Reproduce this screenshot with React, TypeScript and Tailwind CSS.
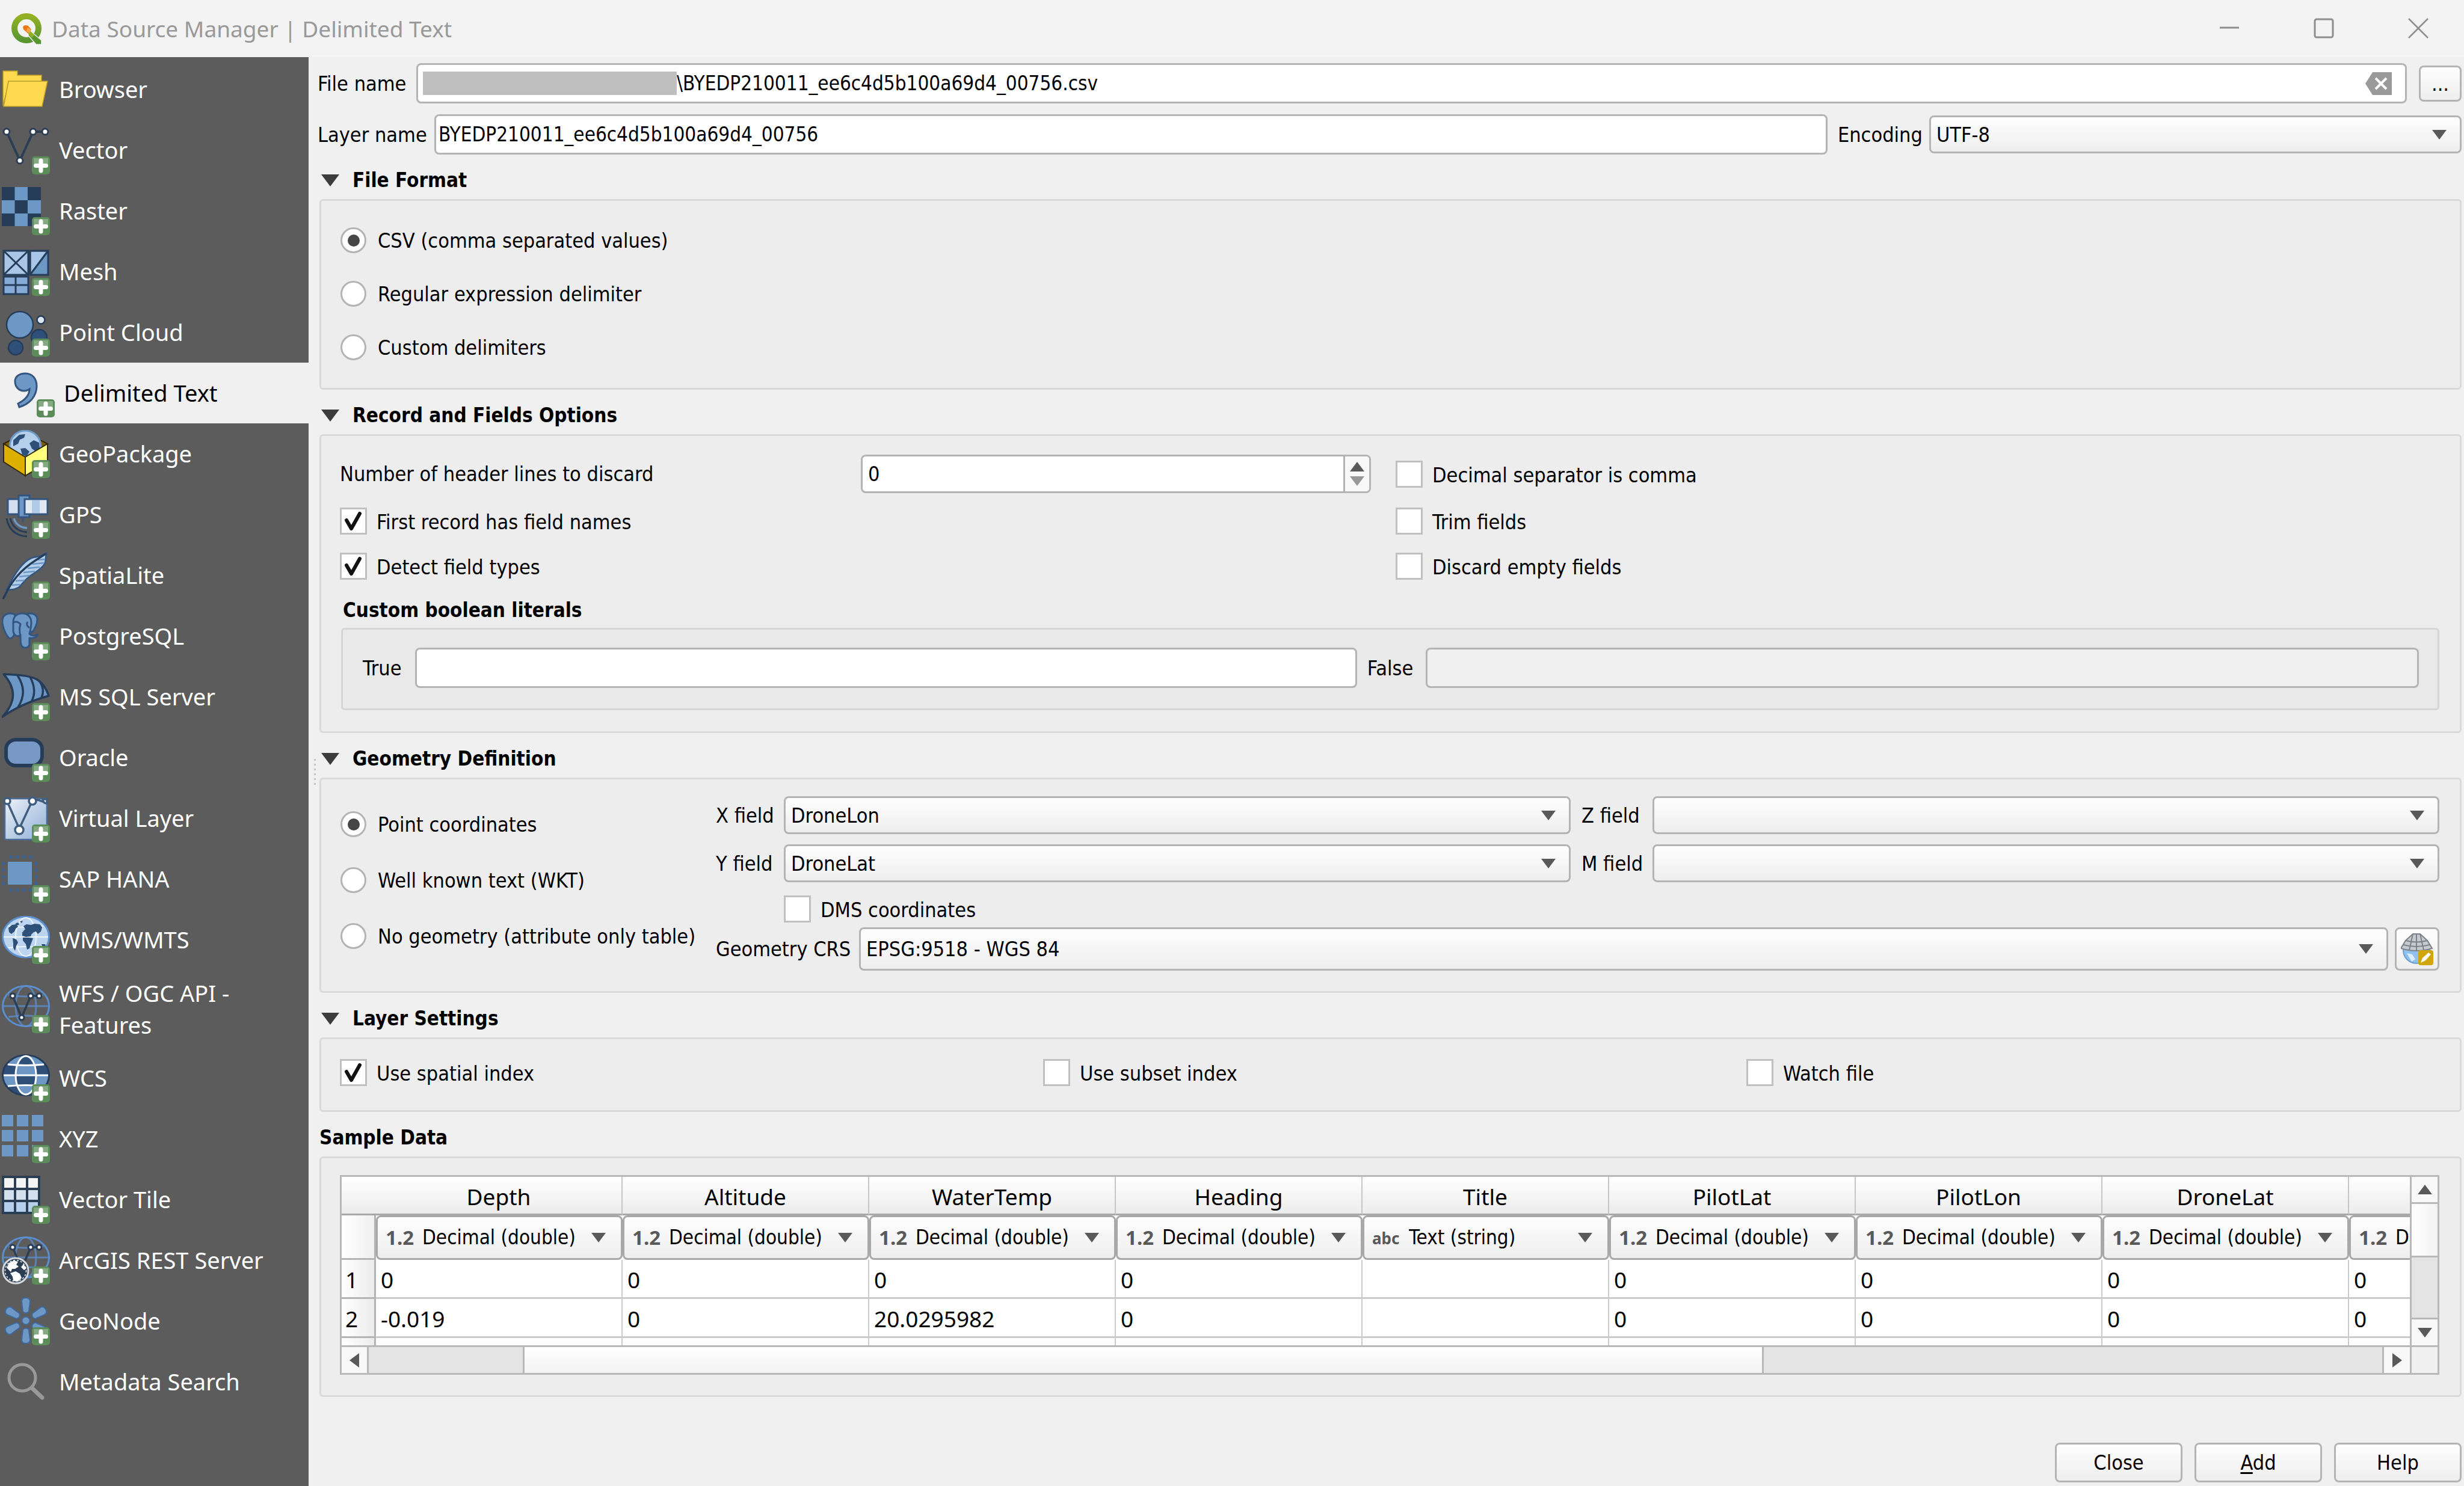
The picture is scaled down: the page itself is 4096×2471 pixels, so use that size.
import React from "react";
import clsx from "clsx";

const BLUE = "#6d97c4";
const NAVY = "#263d5a";
const EDGE = "#335580";

/* ---------- sidebar icons, all on an 80 x 80 canvas ---------- */

function PlusBadge() {
  return (
    <g stroke="none">
      <rect x="50" y="50" width="30" height="30" rx="5" fill="#5b8c5a" />
      <path d="M53 53h24v12q-12 3 -24 0z" fill="#fff" opacity=".25" />
      <path d="M65 57v17M56.500 65.500h17" stroke="#fff" strokeWidth="7" strokeLinecap="round" />
    </g>
  );
}

function Nodes({ pts, r = 5 }: { pts: number[][]; r?: number }) {
  return (
    <>
      {pts.map(([x, y]) => (
        <circle key={`${x}-${y}`} cx={x} cy={y} r={r} fill="#fff" stroke="#2b3e54" strokeWidth="3" />
      ))}
    </>
  );
}

function WireGlobe() {
  return (
    <g fill="none" stroke="#5b8fd0" strokeWidth="3">
      <ellipse cx="40" cy="35" rx="38.500" ry="33.500" />
      <ellipse cx="40" cy="35" rx="17" ry="33.500" opacity=".75" />
      <path d="M2 35h76" opacity=".75" />
      <path d="M11 17q29 4 58 0M11 53q29 -4 58 0" opacity=".75" />
    </g>
  );
}

const continents = (
  <g fill="#2d4f78">
    <path d="M11 20l6-5 7-1 3 4-4 3-2 5-5 4-4-3z" />
    <path d="M22 13l5-2 2 3-3 2zM30 9l5-1-2 4z" />
    <path d="M18 37l6 2 3 5-3 6-2 8-3-5v-8z" />
    <path d="M36 17l5-3 8 1 5-2 9 1 4 5-2 7-5 4-3-4-4 1-3 3-5-3-6 2-4-3 4-4z" />
    <path d="M34 27l8-1 8 3-2 5-8 1-6-2z" />
    <path d="M35 36l9 0 8 1-3 8-3 9-4 2-2-9-5-6z" />
    <path d="M66 47l6 0 1 4-5 1z" />
  </g>
);

const icons: Record<string, React.ReactNode> = {
  folder: (
    <g fill="#fdd94f" stroke="#b99a2a" strokeWidth="1.500">
      <path d="M2 67V9h24v7h40v12H12z" />
      <path d="M3 68L11 26h65l-9 42z" />
    </g>
  ),
  vector: (
    <g>
      <path d="M8 9L30 57L52 9H72" fill="none" stroke="#2b3e54" strokeWidth="4" />
      <Nodes pts={[[8, 9], [30, 57], [52, 9], [72, 9]]} />
      <PlusBadge />
    </g>
  ),
  raster: (
    <g>
      <path d="M0 0h65v65H0z" fill={BLUE} />
      <path d="M0 0h21.500v22H0zM43 0h22v22H43zM21.500 22H43v22H21.500zM0 44h21.500v21H0zM43 44h22v21H43z" fill={NAVY} />
      <PlusBadge />
    </g>
  ),
  mesh: (
    <g stroke={NAVY} strokeWidth="3">
      <path d="M3 5h41v40H3z" fill="#a9c6e6" />
      <path d="M47 5h30v40H47z" fill={BLUE} />
      <path d="M49 7h24L49 40z" fill="#a9c6e6" stroke="none" />
      <path d="M3 48h41v29H3z" fill="#86abd6" />
      <path d="M3 5l41 40M44 5L3 45M77 5L47 45M23 48v29M3 62h41" fill="none" />
      <PlusBadge />
    </g>
  ),
  pointcloud: (
    <g stroke={NAVY} strokeWidth="2.500">
      <circle cx="62" cy="48" r="13" fill="#2d4f78" />
      <circle cx="23" cy="65" r="12" fill="#2d4f78" />
      <circle cx="30" cy="27" r="22" fill={BLUE} />
      <circle cx="65" cy="19" r="6.500" fill="#dce6f2" />
      <PlusBadge />
    </g>
  ),
  comma: (
    <g>
      <path
        d="M14 20C14 12 21 7 31 7C43 7 50 16 50 28C50 45 38 58 21 63L19 57C31 51 38 43 38 33C35 35 32 36 29 36C20 36 14 29 14 20z"
        fill={BLUE}
        stroke={EDGE}
        strokeWidth="3"
      />
      <PlusBadge />
    </g>
  ),
  geopackage: (
    <g>
      <path d="M3 23L39 4L76 23L39 45z" fill="#7a5e00" stroke="#332800" strokeWidth="2" />
      <circle cx="39" cy="27" r="26" fill="#b4cfec" stroke={BLUE} strokeWidth="3" />
      <path d="M19 17l10-9 10-1-2 6-7 3-3 7-8 4zM46 22l7-5 9 4 1 10-6 5-7-5zM31 31l8-1 7 6-5 8-7-3z" fill="#2d4f78" />
      <path d="M3 23L39 45V76L3 53z" fill="#dcb000" stroke="#332800" strokeWidth="2" />
      <path d="M39 45L76 23V54L39 76z" fill="#ffff7d" stroke="#332800" strokeWidth="2" />
      <PlusBadge />
    </g>
  ),
  gps: (
    <g>
      <path d="M10 14h20v25H10z" fill="#d2dff0" stroke={EDGE} strokeWidth="3" />
      <path d="M28 8h18v36H28z" fill={BLUE} stroke={EDGE} strokeWidth="3" />
      <path d="M38 14h38v25H38z" fill="#e2e8f2" stroke={EDGE} strokeWidth="3" />
      <path d="M50 16h13v21H50z" fill="#b0cbe8" />
      <path d="M35 45v7" stroke={EDGE} strokeWidth="3" />
      <path d="M20 46q5 15 22 16" fill="none" stroke={BLUE} strokeWidth="3.500" />
      <path d="M14 46q5 21 28 23M8 46q5 28 34 30" fill="none" stroke={NAVY} strokeWidth="3" />
      <PlusBadge />
    </g>
  ),
  feather: (
    <g>
      <path d="M75 2C66 9 58 8 49 11C38 16 24 31 10 60L8 63C15 64 23 63 29 59C35 53 40 45 48 40C57 34 66 29 71 21C74 15 72 8 75 2z" fill="#b4cfec" stroke={EDGE} strokeWidth="2.500" />
      <path d="M17 56l13-1M23 49l15-1M29 42l17-2M36 35l19-2M43 28l20-2M51 21l19-2M60 14l12-1" stroke={BLUE} strokeWidth="2.500" />
      <path d="M73 4C50 18 28 32 12 60L2 79" fill="none" stroke={NAVY} strokeWidth="3.500" />
      <PlusBadge />
    </g>
  ),
  elephant: (
    <g fill={BLUE} stroke={EDGE} strokeWidth="3" strokeLinejoin="round">
      <path d="M22 4C14 0 2 2 1 13C0 24 7 38 12 43C16 45 20 40 21 36z" />
      <path d="M42 3C50 0 59 4 59 12C59 20 54 29 50 34L41 24z" />
      <path d="M19 17C19 6 26 2 34 2C43 2 49 8 49 17C49 25 47 31 46 36C50 40 56 39 60 37C58 42 52 44 46 43V53C45 61 34 61 32 54C31 49 31 43 31 38C25 42 20 38 19 32z" />
      <path d="M19 17q7-3 12 3q-3 10 0 18M43 16q-4 5 3 10" fill="none" />
      <PlusBadge />
    </g>
  ),
  sail: (
    <g fill={BLUE} stroke={NAVY} strokeWidth="3.500" strokeLinejoin="round">
      <path d="M3 2C24 3 44 4 57 10C68 16 74 26 78 38C50 46 22 58 1 73C24 48 24 26 3 2z" />
      <path d="M26 4C38 22 38 40 27 57M47 7C55 21 56 36 49 48M63 14C69 23 70 32 66 41" fill="none" />
      <PlusBadge />
    </g>
  ),
  oracle: (
    <g>
      <rect x="7" y="10" width="60" height="43" rx="16" fill="#7898c6" stroke={NAVY} strokeWidth="6" />
      <PlusBadge />
    </g>
  ),
  virtual: (
    <g>
      <defs>
        <linearGradient id="virtualBg" x1="0" y1="0" x2="1" y2="1">
          <stop offset="0" stopColor="#eef1f6" />
          <stop offset="1" stopColor="#8fb0d8" />
        </linearGradient>
      </defs>
      <rect x="5" y="7" width="70" height="68" rx="2" fill="url(#virtualBg)" stroke="#4a6c96" strokeWidth="2.500" />
      <path d="M9 12L29 57L50 12L60 9L74 14" fill="none" stroke="#3f5e80" strokeWidth="3.500" />
      <g fill="#fff" stroke="#3f5e80" strokeWidth="3.500">
        <circle cx="9" cy="11" r="5" />
        <circle cx="29" cy="59" r="7" />
        <circle cx="51" cy="11" r="6" />
        <path d="M68 8q1 7 7 7v-7z" />
      </g>
      <PlusBadge />
    </g>
  ),
  hana: (
    <g>
      <path d="M10 11h40v38H10z" fill={BLUE} />
      <g fill="#3d628f">
        {[13, 24, 35, 46].map((p) => (
          <React.Fragment key={p}>
            <circle cx={p + 2} cy="3" r="3" />
            <circle cx={p + 2} cy="58" r="3" />
            <circle cx="3" cy={p + 1} r="3" />
            <circle cx="57" cy={p + 1} r="3" />
          </React.Fragment>
        ))}
      </g>
      <PlusBadge />
    </g>
  ),
  wms: (
    <g>
      <ellipse cx="40" cy="35" rx="38.500" ry="34" fill="#bcd4ee" stroke="#5b8fd0" strokeWidth="3" />
      <g fill="none" stroke="#eef4fb" strokeWidth="2">
        <ellipse cx="40" cy="35" rx="17" ry="32" />
        <path d="M3 35h74M11 17q29 4 58 0M11 53q29 -4 58 0" />
      </g>
      {continents}
      <PlusBadge />
    </g>
  ),
  wfs: (
    <g>
      <WireGlobe />
      <path d="M18 18L33 54L48 18H62" fill="none" stroke="#2b3e54" strokeWidth="3.500" />
      <Nodes pts={[[18, 18], [33, 54], [48, 18], [62, 18]]} r={4} />
      <PlusBadge />
    </g>
  ),
  wcs: (
    <g>
      <clipPath id="wcsClip">
        <ellipse cx="40" cy="35" rx="39" ry="34" />
      </clipPath>
      <clipPath id="wcsCore">
        <ellipse cx="40" cy="35" rx="17" ry="32" />
      </clipPath>
      <g clipPath="url(#wcsClip)">
        <path d="M0 0h80v18H0zM0 35h80v18H0z" fill={BLUE} />
        <path d="M0 18h80v17H0zM0 53h80v17H0z" fill="#2d4f78" />
        <g clipPath="url(#wcsCore)">
          <path d="M0 0h80v18H0zM0 35h80v18H0z" fill="#2d4f78" />
          <path d="M0 18h80v17H0zM0 53h80v17H0z" fill={BLUE} />
        </g>
      </g>
      <ellipse cx="40" cy="35" rx="38.500" ry="33.500" fill="none" stroke={NAVY} strokeWidth="3" />
      <g fill="none" stroke="#fff" strokeWidth="3">
        <ellipse cx="40" cy="35" rx="17" ry="32" />
        <path d="M3 35h74M10 17q30 3 60 0M10 53q30 -3 60 0" />
      </g>
      <PlusBadge />
    </g>
  ),
  xyz: (
    <g fill={BLUE}>
      {[0, 25, 50].map((y) =>
        [0, 25, 50].map((x) => <rect key={`${x}-${y}`} x={x} y={y} width="19" height="19" />)
      )}
      <PlusBadge />
    </g>
  ),
  vectortile: (
    <g>
      <path d="M0 0h64v64H0z" fill="#2b3e54" />
      {["#f4f4f4", "#d4e0ee", "#b6cfea"].map((fill, row) =>
        [0, 1, 2].map((col) => (
          <rect key={`${row}-${col}`} x={4 + col * 20} y={4 + row * 20} width="16" height="16" fill={fill} />
        ))
      )}
      <PlusBadge />
    </g>
  ),
  arcgis: (
    <g>
      <WireGlobe />
      <path d="M18 18L33 54L48 18H62" fill="none" stroke="#2b3e54" strokeWidth="3.500" />
      <Nodes pts={[[18, 18], [48, 18], [62, 18]]} r={4} />
      <circle cx="23" cy="57" r="21" fill="#2b3e54" stroke="#d5d8dc" strokeWidth="3" />
      <path d="M8 52l4-8 8-4 7 2-3 5 4 3-6 4-5 0-2 5zM14 61l9-3 7 4 3 7-6 6-8-1-1-7zM36 46l5 7-4 3-5-5z" fill="#fff" />
      <circle cx="23" cy="57" r="17.500" fill="none" stroke="#fff" strokeWidth="1.500" strokeDasharray="3 3" />
      <PlusBadge />
    </g>
  ),
  geonode: (
    <g fill={BLUE} stroke="#3f689c" strokeWidth="2">
      {[0, 60, 120, 180, 240, 300].map((a) => (
        <path key={a} d="M33 7q0-6 7-6t7 6l-2 17q-5 5-10 0z" transform={`rotate(${a} 40 39)`} />
      ))}
      <circle cx="40" cy="39" r="6.500" />
      <PlusBadge />
    </g>
  ),
  search: (
    <g fill="none" stroke="#999" strokeWidth="5" strokeLinecap="round">
      <circle cx="34" cy="33" r="22" />
      <path d="M50 50L67 66" strokeWidth="7" />
    </g>
  ),
};

const sources = [
  { label: "Browser", icon: "folder" },
  { label: "Vector", icon: "vector" },
  { label: "Raster", icon: "raster" },
  { label: "Mesh", icon: "mesh" },
  { label: "Point Cloud", icon: "pointcloud" },
  { label: "Delimited Text", icon: "comma", active: true },
  { label: "GeoPackage", icon: "geopackage" },
  { label: "GPS", icon: "gps" },
  { label: "SpatiaLite", icon: "feather" },
  { label: "PostgreSQL", icon: "elephant" },
  { label: "MS SQL Server", icon: "sail" },
  { label: "Oracle", icon: "oracle" },
  { label: "Virtual Layer", icon: "virtual" },
  { label: "SAP HANA", icon: "hana" },
  { label: "WMS/WMTS", icon: "wms" },
  { label: "WFS / OGC API - Features", icon: "wfs", tall: true },
  { label: "WCS", icon: "wcs" },
  { label: "XYZ", icon: "xyz" },
  { label: "Vector Tile", icon: "vectortile" },
  { label: "ArcGIS REST Server", icon: "arcgis" },
  { label: "GeoNode", icon: "geonode" },
  { label: "Metadata Search", icon: "search" },
];

const columns = [
  { name: "Depth", type: "Decimal (double)", values: ["0", "-0.019"] },
  { name: "Altitude", type: "Decimal (double)", values: ["0", "0"] },
  { name: "WaterTemp", type: "Decimal (double)", values: ["0", "20.0295982"] },
  { name: "Heading", type: "Decimal (double)", values: ["0", "0"] },
  { name: "Title", type: "Text (string)", values: ["", ""] },
  { name: "PilotLat", type: "Decimal (double)", values: ["0", "0"] },
  { name: "PilotLon", type: "Decimal (double)", values: ["0", "0"] },
  { name: "DroneLat", type: "Decimal (double)", values: ["0", "0"] },
  { name: "", type: "Decimal (double)", values: ["0", "0"] },
];

/* ---------- form parts ---------- */

const fieldBase = "h-[67px] min-w-0 rounded-[8px] border-[3px] border-[#b4b4b4] px-[4px] outline-none";
const fieldBox = clsx(fieldBase, "bg-white");
const pushBox = "rounded-[8px] border-[3px] border-[#b4b4b4] bg-linear-to-b from-[#fefefe] to-[#eeeeee]";

function Arrow({ dir = "down", className }: { dir?: "up" | "down" | "left" | "right"; className?: string }) {
  const d = {
    down: "M0 4H24L12 20z",
    up: "M0 20H24L12 4z",
    left: "M20 0V24L4 12z",
    right: "M4 0V24L20 12z",
  }[dir];
  return (
    <svg viewBox="0 0 24 24" className={clsx("h-[24px] w-[24px] shrink-0", className)} fill="#595959">
      <path d={d} />
    </svg>
  );
}

function Combo({ id, value, className, size = "h-[63px]" }: { id: string; value: string; className?: string; size?: string }) {
  return (
    <div className={clsx("relative min-w-0", className)}>
      <select id={id} className={clsx("block w-full appearance-none px-[9px] outline-none", size, pushBox)}>
        <option>{value}</option>
      </select>
      <Arrow className="pointer-events-none absolute right-[25px] top-1/2 -translate-y-1/2" />
    </div>
  );
}

function Radio({ name, label, checked }: { name: string; label: string; checked?: boolean }) {
  return (
    <label className="flex items-center gap-[19px] whitespace-nowrap pl-[1px]">
      <input
        type="radio"
        name={name}
        defaultChecked={checked}
        className="flex h-[43px] w-[43px] shrink-0 appearance-none items-center justify-center rounded-full border-[3px] border-[#b4b4b4] bg-white before:h-[20px] before:w-[20px] before:rounded-full checked:before:bg-[#454545]"
      />
      {label}
    </label>
  );
}

function Check({ label, checked }: { label: string; checked?: boolean }) {
  return (
    <label className="relative flex items-center gap-[16px]">
      <input
        type="checkbox"
        defaultChecked={checked}
        className="peer h-[45px] w-[45px] shrink-0 appearance-none border-[3px] border-[#c0c0c0] bg-white"
      />
      <svg viewBox="0 0 45 45" className="pointer-events-none absolute left-0 hidden h-[45px] w-[45px] peer-checked:block">
        <path d="M11 21L19 35L33 10" fill="none" stroke="#111" strokeWidth="6" strokeLinecap="round" strokeLinejoin="round" />
      </svg>
      <span className="pt-[3px]">{label}</span>
    </label>
  );
}

function Section({ title, plain, className, children }: { title: string; plain?: boolean; className?: string; children: React.ReactNode }) {
  return (
    <section className="pl-[3px]">
      <h2 className="flex h-[74px] items-center gap-[22px] pt-[12px] text-[33px] font-bold">
        {!plain && (
          <svg viewBox="0 0 30 20" className="ml-[3px] h-[20px] w-[30px]">
            <path d="M0 0H30L15 20z" fill="#3c3c3c" />
          </svg>
        )}
        {title}
      </h2>
      <div className={clsx("rounded-[6px] border-[3px] border-[#d9d9d9] bg-[#ededed] pl-[31px] pr-[34px]", className)}>{children}</div>
    </section>
  );
}

function TitleBar() {
  return (
    <header className="flex h-[95px] shrink-0 items-center bg-[#f3f3f3] pl-[18px] pr-[58px] text-[37px] text-[#999]">
      <svg viewBox="0 0 54 54" className="mr-[14px] h-[54px] w-[54px]">
        <defs>
          <linearGradient id="logoRing" x1="0" y1="0" x2="0" y2="1">
            <stop offset="0" stopColor="#93b023" />
            <stop offset="1" stopColor="#589632" />
          </linearGradient>
        </defs>
        <circle cx="26" cy="26" r="20" fill="none" stroke="url(#logoRing)" strokeWidth="10" />
        <path d="M29 28L51 46V53H42L29 38z" fill="#589632" stroke="#f3f3f3" strokeWidth="1.500" />
        <path d="M31 29L39 37L35 42L29 35z" fill="#93b023" />
        <path d="M20 24Q22 19 29 22L34 28L29 35L21 28z" fill="#ee7913" />
        <path d="M28 25L34 28L31 34L26 31z" fill="#f0a84f" />
      </svg>
      <span className="grow">Data Source Manager | Delimited Text</span>
      <div className="flex gap-[121px]">
        <button aria-label="Minimize">
          <svg viewBox="0 0 36 36" className="h-[36px] w-[36px]" stroke="#8e8e8e" strokeWidth="3">
            <path d="M2 16H34" />
          </svg>
        </button>
        <button aria-label="Maximize">
          <svg viewBox="0 0 36 36" className="h-[36px] w-[36px]" fill="none" stroke="#8e8e8e" strokeWidth="3">
            <rect x="3" y="2" width="30" height="30" rx="3" />
          </svg>
        </button>
        <button aria-label="Close window">
          <svg viewBox="0 0 36 36" className="h-[36px] w-[36px]" stroke="#8e8e8e" strokeWidth="2.500">
            <path d="M2 1L34 33M34 1L2 33" />
          </svg>
        </button>
      </div>
    </header>
  );
}

function Sidebar() {
  return (
    <nav className="w-[513px] shrink-0 bg-[#5c5c5c] pt-[3px] text-[38px] leading-[53px] text-white">
      {sources.map((s) => (
        <a
          key={s.label}
          href="#"
          className={clsx(
            "flex items-center gap-[15px] pr-[90px]",
            s.tall ? "h-[129px]" : "h-[101px]",
            s.active ? "bg-[#f0f0f0] pl-[11px] text-black" : "pl-[3px]"
          )}
        >
          <svg viewBox="0 0 80 80" className="h-[80px] w-[80px] shrink-0">
            {icons[s.icon]}
          </svg>
          <span className={s.tall ? "" : "whitespace-nowrap"}>{s.label}</span>
        </a>
      ))}
    </nav>
  );
}

function SampleTable() {
  return (
    <div className="grid h-[332px] grid-cols-[minmax(0,1fr)_46px] grid-rows-[minmax(0,1fr)_46px] border-[3px] border-[#b8b8b8] bg-white font-['Noto_Sans',sans-serif] text-[37px]">
      <div className="overflow-hidden">
        <table className="w-[3747px] table-fixed border-separate border-spacing-0">
          <colgroup>
            <col className="w-[57px]" />
            {columns.map((c, i) => (
              <col key={i} className="w-[410px]" />
            ))}
          </colgroup>
          <thead>
            <tr className="h-[64px] bg-linear-to-b from-white to-[#ebebeb]">
              <th className="border-b-[3px] border-[#a8a8a8]" />
              {columns.map((c, i) => (
                <th key={i} className="border-b-[3px] border-r-[2px] border-b-[#a8a8a8] border-r-[#c6c6c6] p-0 pt-[4px] font-normal leading-[40px]">
                  {c.name}
                </th>
              ))}
            </tr>
          </thead>
          <tbody>
            <tr className="h-[74px]">
              <th className="border-b-[3px] border-r-[3px] border-[#b4b4b4] bg-linear-to-r from-white to-[#f0f0f0]" />
              {columns.map((c, i) => (
                <td key={i} className="p-0">
                  <div className="relative flex h-[74px] items-center rounded-[8px] border-[3px] border-[#a8a8a8] bg-linear-to-b from-[#fefefe] to-[#eeeeee] font-['DejaVu_Sans_Condensed','Noto_Sans',sans-serif] text-[33px]">
                    <span className="pointer-events-none absolute left-[13px] font-['Noto_Sans',sans-serif] text-[33px] font-bold text-[#595959]">
                      {c.name === "Title" ? <span className="text-[26px]">abc</span> : "1.2"}
                    </span>
                    <select aria-label={`Column ${i + 1} type`} className="h-full w-full appearance-none bg-transparent pl-[74px] outline-none">
                      <option>{c.type}</option>
                    </select>
                    <Arrow className="pointer-events-none absolute right-[25px]" />
                  </div>
                </td>
              ))}
            </tr>
            {["1", "2", ""].map((rowLabel, row) => (
              <tr key={row} className="h-[65px]">
                <th className="border-b-[3px] border-r-[3px] border-[#b4b4b4] bg-linear-to-r from-white to-[#ececec] p-0 pl-[6px] pt-[4px] text-left font-normal leading-[40px]">
                  {rowLabel}
                </th>
                {columns.map((c, i) => (
                  <td key={i} className="border-b-[3px] border-r-[2px] border-[#cbcbcb] p-0 pl-[8px] pt-[4px] leading-[40px]">
                    {c.values[row]}
                  </td>
                ))}
              </tr>
            ))}
          </tbody>
        </table>
      </div>
      {/* vertical scroll bar */}
      <div className="flex flex-col border-l-[3px] border-[#b8b8b8] bg-[#e4e4e4]">
        <div className="flex h-[45px] items-center justify-center border-b-[3px] border-[#b8b8b8] bg-[#f8f8f8]">
          <Arrow dir="up" />
        </div>
        <div className="h-[89px] border-b-[3px] border-[#b8b8b8] bg-linear-to-r from-white to-[#f2f2f2]" />
        <div className="grow" />
        <div className="flex h-[46px] items-center justify-center border-t-[3px] border-[#b8b8b8] bg-[#f8f8f8]">
          <Arrow />
        </div>
      </div>
      {/* horizontal scroll bar */}
      <div className="flex border-t-[3px] border-[#b8b8b8] bg-[#e4e4e4]">
        <div className="flex w-[45px] shrink-0 items-center justify-center border-r-[3px] border-[#b8b8b8] bg-[#f8f8f8]">
          <Arrow dir="left" />
        </div>
        <div className="flex-[257]" />
        <div className="flex-[2062] border-x-[3px] border-[#b8b8b8] bg-linear-to-b from-white to-[#f2f2f2]" />
        <div className="flex-[1030]" />
        <div className="flex w-[46px] shrink-0 items-center justify-center border-l-[3px] border-[#b8b8b8] bg-[#f8f8f8]">
          <Arrow dir="right" />
        </div>
      </div>
      <div className="border-l-[3px] border-t-[3px] border-[#b8b8b8] bg-[#f0f0f0]" />
    </div>
  );
}

export default function App() {
  return (
    <div className="flex min-h-screen flex-col bg-[#f0f0f0] font-['Noto_Sans',sans-serif] text-black">
      <TitleBar />
      <div className="flex grow">
        <Sidebar />

        {/* splitter grip */}
        <div className="flex w-[15px] shrink-0 flex-col items-end justify-center gap-[5px] pr-[3px]">
          {[0, 1, 2, 3, 4, 5].map((i) => (
            <span key={i} className="h-[3px] w-[3px] bg-[#c4c4c4]" />
          ))}
        </div>

        <main className="flex min-w-0 grow flex-col pb-[6px] pr-[4px] pt-[10px] font-['DejaVu_Sans_Condensed','Noto_Sans',sans-serif] text-[34px] leading-[40px]">
          <div className="flex items-center">
            <label htmlFor="fileName" className="w-[164px] shrink-0">File name</label>
            <div className={clsx("flex grow items-center", fieldBox)}>
              <span className="ml-[4px] h-[39px] w-[422px] shrink-0 bg-[#bfbfbf]" />
              <input id="fileName" className="min-w-0 grow text-[33px] outline-none" defaultValue="\BYEDP210011_ee6c4d5b100a69d4_00756.csv" />
              <button aria-label="Clear file name" className="mr-[18px] shrink-0">
                <svg viewBox="0 0 44 38" className="h-[38px] w-[44px]">
                  <path d="M12 0H44V38H12L0 19z" fill="#9a9a9a" />
                  <path d="M17 10L35 28M35 10L17 28" stroke="#fff" strokeWidth="4" />
                </svg>
              </button>
            </div>
            <button className={clsx("ml-[20px] h-[60px] w-[71px] shrink-0", pushBox)}>...</button>
          </div>

          <div className="mt-[18px] flex items-center">
            <label htmlFor="layerName" className="w-[194px] shrink-0">Layer name</label>
            <input id="layerName" className={clsx("flex-[2312] text-[33px]", fieldBox)} defaultValue="BYEDP210011_ee6c4d5b100a69d4_00756" />
            <label htmlFor="encoding" className="ml-[17px] w-[152px] shrink-0">Encoding</label>
            <Combo id="encoding" value="UTF-8" className="flex-[889]" />
          </div>

          <Section title="File Format" className="pb-[23px] pt-[21px]">
            <div className="grid auto-rows-[89px]">
              <Radio name="format" label="CSV (comma separated values)" checked />
              <Radio name="format" label="Regular expression delimiter" />
              <Radio name="format" label="Custom delimiters" />
            </div>
          </Section>

          <Section title="Record and Fields Options" className="pb-[35px] pt-[23px]">
            <div className="grid grid-cols-[1714fr_1735fr] grid-rows-[80px_77px_73px] gap-x-[41px]">
              <div className="grid grid-cols-[866fr_848fr] items-center">
                <label htmlFor="skipLines">Number of header lines to discard</label>
                <div className="flex h-[64px] items-center overflow-hidden rounded-[8px] border-[3px] border-[#b4b4b4] bg-white">
                  <input id="skipLines" className="min-w-0 grow px-[9px] outline-none" defaultValue="0" />
                  <div className="flex h-full w-[43px] shrink-0 flex-col items-center justify-center border-l-[3px] border-[#b4b4b4] bg-[#f8f8f8]">
                    <button aria-label="More lines"><Arrow dir="up" className="h-[22px]" /></button>
                    <button aria-label="Fewer lines"><Arrow className="h-[22px] opacity-60" /></button>
                  </div>
                </div>
              </div>
              <Check label="Decimal separator is comma" />
              <Check label="First record has field names" checked />
              <Check label="Trim fields" />
              <Check label="Detect field types" checked />
              <Check label="Discard empty fields" />
            </div>
            <h3 className="flex h-[66px] items-center pl-[5px] pt-[8px] text-[33px] font-bold">Custom boolean literals</h3>
            <div className="ml-[2px] flex items-center rounded-[6px] border-[3px] border-[#d6d6d6] bg-[#e9e9e9] pb-[34px] pl-[33px] pr-[31px] pt-[30px]">
              <label htmlFor="trueLiteral" className="w-[87px] shrink-0">True</label>
              <input id="trueLiteral" className={clsx("flex-[1565]", fieldBox)} />
              <label htmlFor="falseLiteral" className="ml-[17px] w-[97px] shrink-0">False</label>
              <input id="falseLiteral" className={clsx("flex-[1651] bg-[#f0f0f0]", fieldBase)} disabled />
            </div>
          </Section>

          <Section title="Geometry Definition" className="flex pb-[34px] pt-[28px]">
            <div className="grid w-[625px] shrink-0 auto-rows-[93px]">
              <Radio name="geometry" label="Point coordinates" checked />
              <Radio name="geometry" label="Well known text (WKT)" />
              <Radio name="geometry" label="No geometry (attribute only table)" />
            </div>
            <div className="min-w-0 grow">
              <div className="grid grid-cols-[113px_minmax(0,1fr)_136px_minmax(0,1fr)] items-center gap-y-[17px]">
                <label htmlFor="xField">X field</label>
                <Combo id="xField" value="DroneLon" />
                <label htmlFor="zField" className="pl-[18px]">Z field</label>
                <Combo id="zField" value="" />
                <label htmlFor="yField">Y field</label>
                <Combo id="yField" value="DroneLat" />
                <label htmlFor="mField" className="pl-[18px]">M field</label>
                <Combo id="mField" value="" />
              </div>
              <div className="mb-[8px] ml-[113px] mt-[22px]">
                <Check label="DMS coordinates" />
              </div>
              <div className="flex items-center">
                <label htmlFor="crs" className="w-[238px] shrink-0">Geometry CRS</label>
                <Combo id="crs" value="EPSG:9518 - WGS 84" className="grow" size="h-[72px]" />
                <button aria-label="Select CRS" className={clsx("ml-[11px] flex h-[72px] w-[74px] shrink-0 items-center justify-center", pushBox)}>
                  <svg viewBox="0 0 54 54" className="h-[54px] w-[54px]">
                    <circle cx="26" cy="29" r="22" fill="#8fc0ee" stroke="#6b9fd4" strokeWidth="2" />
                    <path d="M10 34l9 2 5 8-6 4zM28 32l10 0 4 6-8 2z" fill="#dcecfa" />
                    <path d="M20 2H32L44 13L52 26Q26 34 0 26L8 13z" fill="#c5cbd2" stroke="#7c8288" strokeWidth="2" />
                    <path d="M8 13Q26 18 44 13M4 20Q26 26 48 20M26 2V30M20 2L14 29M32 2L38 29" fill="none" stroke="#7c8288" strokeWidth="2" />
                    <rect x="29" y="29" width="25" height="25" rx="4" fill="#cfa60c" />
                    <path d="M33 50L36 42L46 33L50 36L41 46z" fill="#fff" />
                  </svg>
                </button>
              </div>
            </div>
          </Section>

          <Section title="Layer Settings" className="grid grid-cols-3 gap-x-[17px] pb-[40px] pt-[33px]">
            <Check label="Use spatial index" checked />
            <Check label="Use subset index" />
            <Check label="Watch file" />
          </Section>

          <Section title="Sample Data" plain className="pb-[34px] pt-[28px]">
            <SampleTable />
          </Section>

          <div className="mt-auto flex justify-end gap-[20px]">
            <button className={clsx("h-[66px] w-[212px]", pushBox)}>Close</button>
            <button className={clsx("h-[66px] w-[212px]", pushBox)}>
              <span className="underline underline-offset-4">A</span>dd
            </button>
            <button className={clsx("h-[66px] w-[212px]", pushBox)}>Help</button>
          </div>
        </main>
      </div>
    </div>
  );
}
